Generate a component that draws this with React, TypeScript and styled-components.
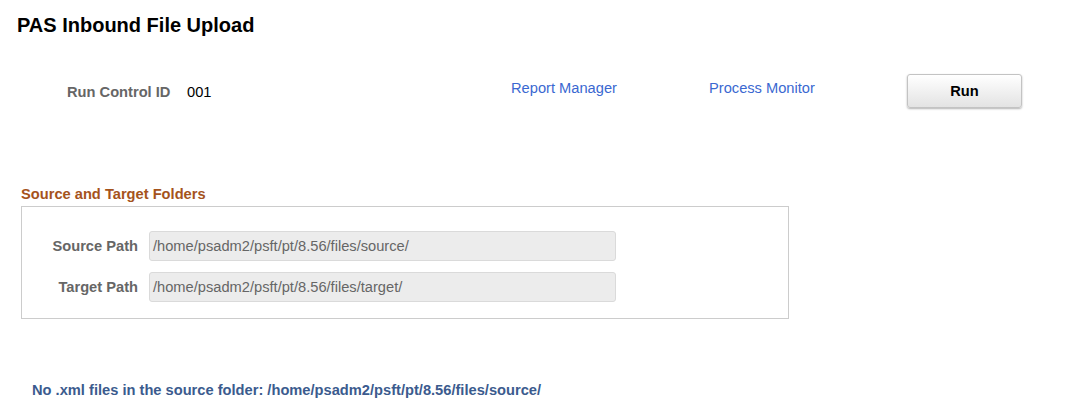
import styled, { createGlobalStyle } from "styled-components";

const GlobalStyle = createGlobalStyle`
	body {
		margin: 0;
		background: #ffffff;
		font-family: "Liberation Sans", Arial, sans-serif;
	}
`;

const Page = styled.div`
	display: flex;
	flex-direction: column;
	width: 1078px;
	height: 412px;
	overflow: hidden;
`;

const Title = styled.h1`
	margin: 13px 0 0 17px;
	font-size: 20px;
	font-weight: bold;
	color: #000;
	line-height: 24px;
`;

const TopRow = styled.div`
	display: flex;
	align-items: center;
	margin-top: 37px;
	height: 34px;
	white-space: nowrap;
`;

const FieldLabel = styled.span`
	flex-shrink: 0;
	font-size: 14.67px;
	font-weight: bold;
	color: #666;
	white-space: nowrap;
`;

const RunLabel = styled(FieldLabel)`
	margin-left: 67px;
	margin-top: 2px;
	width: 103px;
`;

const RunValue = styled.span`
	flex-shrink: 0;
	margin-left: 17px;
	margin-top: 2px;
	width: 324px;
	font-size: 14.67px;
	color: #000;
`;

const Link = styled.a<{ $width: number }>`
	flex-shrink: 0;
	width: ${(p) => p.$width}px;
	margin-top: -7px;
	font-size: 14.67px;
	color: #3a68d1;
	text-decoration: none;
	cursor: pointer;
`;

const RunButton = styled.button`
	flex-shrink: 0;
	width: 115px;
	height: 34px;
	border: 1px solid #c3c3c3;
	border-radius: 3px;
	background: linear-gradient(to bottom, #ffffff, #e3e3e3);
	box-shadow: 0 1px 2px rgba(0, 0, 0, 0.3);
	font-family: "Liberation Sans", Arial, sans-serif;
	font-size: 14.67px;
	font-weight: bold;
	color: #000;
	cursor: pointer;
`;

const SectionTitle = styled.h2`
	margin: 77px 0 0 21px;
	font-size: 14.67px;
	font-weight: bold;
	color: #a5531c;
	line-height: 18px;
`;

const GroupBox = styled.div`
	display: flex;
	flex-direction: column;
	gap: 11px;
	margin: 3px 0 0 21px;
	width: 768px;
	height: 113px;
	padding-top: 24px;
	box-sizing: border-box;
	border: 1px solid #cccccc;
`;

const PathRow = styled.div`
	display: flex;
	align-items: center;
`;

const PathLabel = styled(FieldLabel)`
	width: 116px;
	text-align: right;
	margin-right: 11px;
`;

const PathInput = styled.div`
	width: 467px;
	height: 30px;
	box-sizing: border-box;
	padding: 0 3px;
	display: flex;
	align-items: center;
	background: #ececec;
	border: 1px solid #dadada;
	border-radius: 3px;
	font-size: 14.67px;
	color: #666;
`;

const Message = styled.p`
	margin: 62px 0 0 32px;
	font-size: 14.67px;
	font-weight: bold;
	color: #3b5b8e;
	line-height: 18px;
`;

const paths = [
	{ label: "Source Path", value: "/home/psadm2/psft/pt/8.56/files/source/" },
	{ label: "Target Path", value: "/home/psadm2/psft/pt/8.56/files/target/" },
];

function App()
{
	return (<>
		<GlobalStyle />
		<Page>
			<Title>PAS Inbound File Upload</Title>
			<TopRow>
				<RunLabel>Run Control ID</RunLabel>
				<RunValue>001</RunValue>
				<Link $width={198}>Report Manager</Link>
				<Link $width={198}>Process Monitor</Link>
				<RunButton>Run</RunButton>
			</TopRow>
			<SectionTitle>Source and Target Folders</SectionTitle>
			<GroupBox>
				{paths.map((p) => (
					<PathRow key={p.label}>
						<PathLabel>{p.label}</PathLabel>
						<PathInput>{p.value}</PathInput>
					</PathRow>
				))}
			</GroupBox>
			<Message>No .xml files in the source folder: /home/psadm2/psft/pt/8.56/files/source/</Message>
		</Page>
	</>);
}

export default App;
